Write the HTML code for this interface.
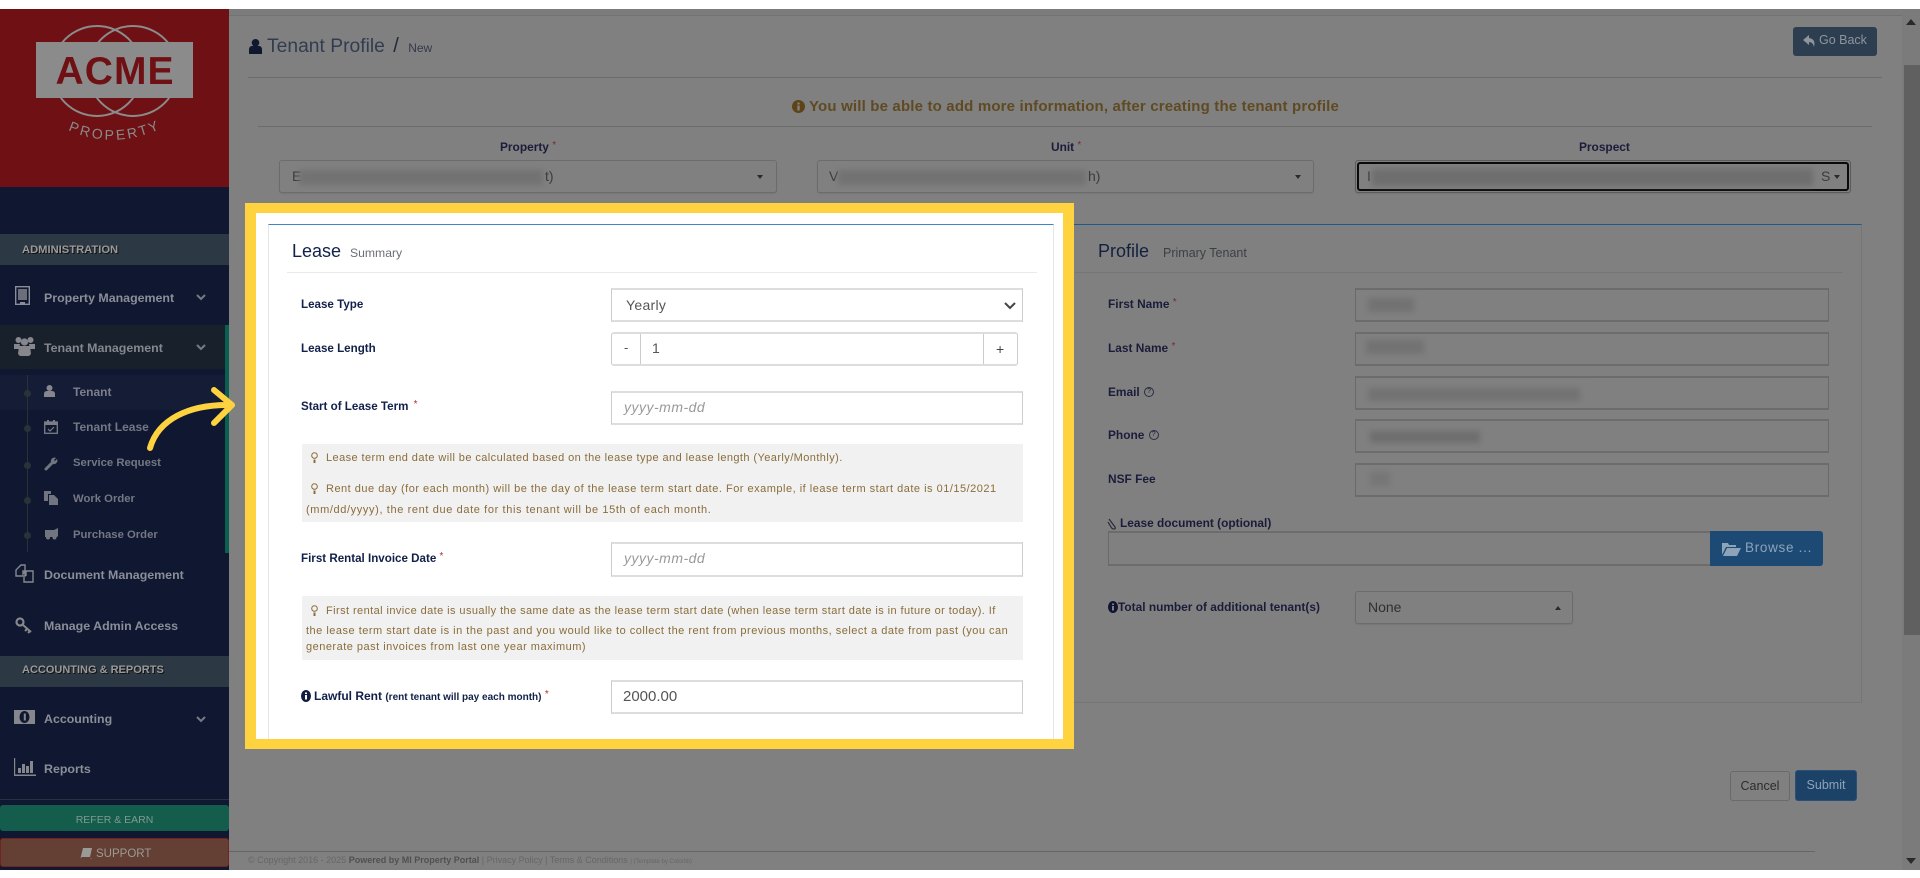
<!DOCTYPE html>
<html lang="en"><head><meta charset="utf-8"><title>Tenant Profile</title>
<style>
html,body{margin:0;padding:0;width:1920px;height:878px;overflow:hidden;background:#fff;font-family:"Liberation Sans",sans-serif}
#p{position:relative;width:1920px;height:878px;overflow:hidden;background:#fff}
.a{position:absolute;box-sizing:border-box}
.t{position:absolute;white-space:nowrap;height:20px;line-height:20px}
.side{font-size:12.4px;font-weight:bold;color:#8b8e98}
.sub{font-size:11.3px;font-weight:bold;color:#747784}
.band{font-size:11px;font-weight:bold;color:#9a9a9a;text-shadow:1px 1px 0 #111}
.lb{font-size:11.6px;font-weight:bold;color:#12204a}
.dl{font-size:11.9px;font-weight:bold;color:#1a1d3a}
.br{font-size:11px;color:#8a6d3b;letter-spacing:.42px}
.inp{position:absolute;box-sizing:border-box;background:#fff;border:1px solid #ccc;border-top:2px solid #ddd;border-bottom:2px solid #ddd}
.dk{position:absolute;box-sizing:border-box;border:1px solid #6a6a6a;border-top:2px solid #6c6c6c;border-bottom:2px solid #6c6c6c;background:#808080}
.sel{position:absolute;box-sizing:border-box;border:1px solid #6c6c6c;border-radius:3px;background:#808080;box-shadow:0 1px 1px #777}
.b{position:absolute;background:#727272;filter:blur(3px)}
.ph{font-size:14px;font-style:italic;color:#999;letter-spacing:.5px}
.req{color:#b03030;font-size:10px;font-weight:normal;position:relative;top:-3px}
.reqd{color:#7a2a2a;font-size:10px;font-weight:normal;position:relative;top:-3px}
.q{display:inline-block;box-sizing:border-box;width:10px;height:10px;border:1px solid #2a2d44;border-radius:50%;font-size:7px;line-height:8px;text-align:center;font-weight:normal;margin-left:1px;position:relative;top:-1px;vertical-align:middle}
svg{position:absolute;overflow:visible}
</style></head><body><div id="p">

<!-- page background -->
<div class="a" style="left:0;top:9px;width:1920px;height:861px;background:#808080"></div>
<div class="a" style="left:229px;top:9px;width:1673px;height:7px;background:#7c7c7c;border-bottom:1px solid #727272"></div>

<!-- scrollbar -->
<div class="a" style="left:1902px;top:9px;width:18px;height:861px;background:#7b7b7b"></div>
<div class="a" style="left:1904px;top:65px;width:16px;height:570px;background:#606060"></div>
<svg style="left:1906px;top:18px" width="12" height="8"><path d="M5 1L10 7H0z" fill="#2a2a2a"/></svg>
<svg style="left:1906px;top:857px" width="12" height="8"><path d="M0 1H10L5 7z" fill="#2a2a2a"/></svg>

<!-- sidebar -->
<div class="a" style="left:0;top:9px;width:229px;height:861px;background:#0f1830"></div>
<div class="a" style="left:0;top:9px;width:229px;height:178px;background:#6e1014"></div>
<svg style="left:0;top:9px" width="229" height="178" viewBox="0 9 229 178">
<circle cx="97" cy="71" r="45" fill="none" stroke="#8b8b8b" stroke-width="2"/>
<circle cx="133" cy="71" r="45" fill="none" stroke="#8b8b8b" stroke-width="2"/>
<rect x="36" y="42" width="157" height="56" fill="#8b8b8b"/>
<text x="114.500" y="84" font-family="Liberation Sans" font-weight="bold" font-size="39" text-anchor="middle" fill="#6e1014" textLength="118">ACME</text>
<path id="arc" d="M68 130 Q113 150 160 129" fill="none"/>
<text font-family="Liberation Sans" font-size="14" fill="#8b8b8b" letter-spacing="2.500"><textPath href="#arc">PROPERTY</textPath></text>
</svg>

<div class="a" style="left:0;top:234px;width:229px;height:31px;background:#2c3844"></div>
<div class="t band" style="left:22px;top:240px;font-size:11.2px">ADMINISTRATION</div>

<!-- Property Management -->
<svg style="left:15px;top:286px" width="15" height="19" viewBox="0 0 15 19"><rect x=".7" y=".7" width="13.600" height="17.600" fill="none" stroke="#8b8e98" stroke-width="1.400"/><path d="M3 3h9v11H3z" fill="#6c6f7a"/><path d="M5 16h5v2H5z" fill="#8b8e98"/></svg>
<div class="t side" style="left:44px;top:288px">Property Management</div>
<svg style="left:196px;top:294px" width="10" height="7"><path d="M1 1L5 5L9 1" fill="none" stroke="#777a85" stroke-width="2"/></svg>

<!-- Tenant Management -->
<div class="a" style="left:0;top:325px;width:225px;height:44px;background:#18212b"></div>
<div class="a" style="left:225px;top:325px;width:4px;height:228px;background:#0a6050"></div>
<svg style="left:14px;top:336px" width="21" height="20" viewBox="0 0 21 20" fill="#85878c"><circle cx="4.500" cy="4" r="3"/><circle cx="16.500" cy="4" r="3"/><circle cx="10.500" cy="6" r="3.600"/><path d="M0 8h6l-1 5H0zM15 8h6v5h-5zM5 10h11l1 8-2 2H6l-2-2z"/></svg>
<div class="t side" style="left:44px;top:338px;color:#84878c">Tenant Management</div>
<svg style="left:196px;top:344px" width="10" height="7"><path d="M1 1L5 5L9 1" fill="none" stroke="#777a85" stroke-width="2"/></svg>

<!-- submenu -->
<div class="a" style="left:0;top:375px;width:225px;height:35px;background:#141c36"></div>
<div class="a" style="left:27px;top:375px;width:1px;height:177px;background:#2a3238"></div>
<div class="a" style="left:24px;top:390px;width:7px;height:7px;border-radius:50%;background:#2a3238"></div>
<div class="a" style="left:24px;top:425px;width:7px;height:7px;border-radius:50%;background:#2a3238"></div>
<div class="a" style="left:24px;top:462px;width:7px;height:7px;border-radius:50%;background:#2a3238"></div>
<div class="a" style="left:24px;top:497px;width:7px;height:7px;border-radius:50%;background:#2a3238"></div>
<div class="a" style="left:24px;top:532px;width:7px;height:7px;border-radius:50%;background:#2a3238"></div>

<svg style="left:44px;top:385px" width="11" height="12" viewBox="0 0 11 12" fill="#85878c"><circle cx="5.500" cy="3" r="3"/><path d="M0 12V9q0-3 3-3h5q3 0 3 3v3z"/></svg>
<div class="t sub" style="left:73px;top:382px;color:#7c7f8c;font-size:12px">Tenant</div>
<svg style="left:44px;top:420px" width="14" height="14" viewBox="0 0 14 14"><rect x=".7" y="2" width="12.600" height="11.300" fill="none" stroke="#7a7d88" stroke-width="1.300"/><path d="M1 2h12v3H1zM3 0h2v3H3zM9 0h2v3H9z" fill="#7a7d88"/><path d="M4 9l2 2 4-4" fill="none" stroke="#7a7d88" stroke-width="1.200"/></svg>
<div class="t sub" style="left:73px;top:417px;font-size:12px">Tenant Lease</div>
<svg style="left:45px;top:457px" width="13" height="13" viewBox="0 0 13 13"><path d="M1 12L7 6" stroke="#727580" stroke-width="3" stroke-linecap="round"/><path d="M6 5a3.500 3.500 0 0 1 5-4L9 3l1 1 2-2a3.500 3.500 0 0 1-4 5z" fill="#727580"/></svg>
<div class="t sub" style="left:73px;top:453px">Service Request</div>
<svg style="left:44px;top:491px" width="14" height="14" viewBox="0 0 14 14" fill="#727580"><path d="M0 0h7v3H4v7H0z"/><path d="M5 4h5l4 4v6H5z"/></svg>
<div class="t sub" style="left:73px;top:489px">Work Order</div>
<svg style="left:45px;top:528px" width="13" height="12" viewBox="0 0 13 12" fill="#727580"><path d="M0 2h9l4-2v8l-1 1H0z"/><circle cx="3" cy="9.500" r="2"/><circle cx="9.500" cy="9.500" r="2"/></svg>
<div class="t sub" style="left:73px;top:525px">Purchase Order</div>

<!-- Document Management -->
<svg style="left:15px;top:564px" width="19" height="19" viewBox="0 0 19 19" fill="none" stroke="#85878c" stroke-width="1.400"><path d="M1 12V6l5-5h4v11z"/><path d="M8 7h3l-3 3zM9 7h4l5 0v11H9v-5"/><path d="M11 7v5"/></svg>
<div class="t side" style="left:44px;top:565px">Document Management</div>

<!-- Manage Admin -->
<svg style="left:15px;top:617px" width="18" height="17" viewBox="0 0 18 17" fill="none" stroke="#85878c"><circle cx="5" cy="5" r="3.500" stroke-width="2.200"/><path d="M8 8l8 7M12 12l-2 2M15 14l-2 2" stroke-width="2"/></svg>
<div class="t side" style="left:44px;top:616px">Manage Admin Access</div>

<div class="a" style="left:0;top:656px;width:229px;height:31px;background:#2c3844"></div>
<div class="t band" style="left:22px;top:660px">ACCOUNTING &amp; REPORTS</div>

<!-- Accounting -->
<svg style="left:14px;top:710px" width="21" height="14" viewBox="0 0 21 14"><rect width="21" height="14" fill="#85878c"/><ellipse cx="10.500" cy="7" rx="5" ry="6" fill="#0f1830"/><rect x="9.800" y="3.500" width="2" height="7" fill="#85878c"/></svg>
<div class="t side" style="left:44px;top:709px">Accounting</div>
<svg style="left:196px;top:716px" width="10" height="7"><path d="M1 1L5 5L9 1" fill="none" stroke="#777a85" stroke-width="2"/></svg>

<!-- Reports -->
<svg style="left:14px;top:758px" width="22" height="18" viewBox="0 0 22 18" fill="#85878c"><path d="M0 0h1.200v16.500H22V18H0z"/><rect x="4" y="10" width="3" height="5"/><rect x="8" y="6" width="3" height="9"/><rect x="12" y="8" width="3" height="7"/><rect x="16" y="3" width="3" height="12"/></svg>
<div class="t side" style="left:44px;top:759px">Reports</div>

<div class="a" style="left:0;top:799px;width:229px;height:1px;background:#2a3042"></div>
<div class="a" style="left:0;top:805px;width:229px;height:26px;background:#145c4c;border-radius:3px;text-align:center;line-height:30px;font-size:10.500px;color:#7e9a90">REFER &amp; EARN</div>
<div class="a" style="left:0;top:838px;width:229px;height:29px;background:#644034;border:1px solid #772222;border-radius:3px"></div>
<svg style="left:81px;top:848px" width="11" height="11" viewBox="0 0 11 11" fill="#9a9a96"><path d="M2 0h9L9 9H1a1 1 0 0 0 0 2h8l2-1-1 1H1Q-1 10 0 8z"/></svg>
<div class="t" style="left:96px;top:844px;font-size:11.500px;color:#9a9a96">SUPPORT</div>

<!-- header -->
<svg style="left:249px;top:39px" width="13" height="15" viewBox="0 0 13 15" fill="#101830"><circle cx="6.500" cy="3.800" r="3.800"/><path d="M0 15v-4q0-4 3-4h7q3 0 3 4v4z"/></svg>
<div class="t" style="left:267px;top:36px;font-size:19.300px;color:#323c50">Tenant Profile <span style="color:#20283c;font-size:20px;margin-left:3px">/</span> <span style="font-size:12px;color:#333a48;margin-left:4px">New</span></div>
<div class="a" style="left:1793px;top:27px;width:84px;height:29px;background:#2c3e50;border-radius:3px"></div>
<svg style="left:1803px;top:35px" width="13" height="13" viewBox="0 0 13 13" fill="#8e959e"><path d="M6 0L0 5l6 5V7q4 0 5 5 2-8-5-9z"/></svg>
<div class="t" style="left:1819px;top:30px;font-size:12.500px;color:#8e959e">Go Back</div>
<div class="a" style="left:248px;top:77px;width:1634px;height:1px;background:#6c6c6c"></div>

<svg style="left:792px;top:100px" width="13" height="13" viewBox="0 0 13 13"><circle cx="6.500" cy="6.500" r="6.500" fill="#5e4318"/><rect x="5.300" y="2.500" width="2.400" height="2" fill="#808080"/><rect x="5.300" y="5.500" width="2.400" height="5" fill="#808080"/></svg>
<div class="t" style="left:809px;top:97px;font-size:15px;font-weight:bold;color:#5f4a22;letter-spacing:.17px">You will be able to add more information, after creating the tenant profile</div>
<div class="a" style="left:258px;top:126px;width:1614px;height:1px;background:#6c6c6c"></div>

<div class="t dl" style="left:500px;top:137px">Property <span class="reqd">*</span></div>
<div class="t dl" style="left:1051px;top:137px">Unit <span class="reqd">*</span></div>
<div class="t dl" style="left:1579px;top:137px">Prospect</div>

<div class="sel" style="left:279px;top:160px;width:498px;height:33px"></div>
<div class="t" style="left:292px;top:166px;font-size:14px;color:#3c3c3c">E</div>
<div class="b" style="left:299px;top:170px;width:244px;height:15px"></div>
<div class="t" style="left:545px;top:166px;font-size:14px;color:#3c3c3c">t)</div>
<svg style="left:757px;top:175px" width="6" height="4"><path d="M0 0H6L3 4z" fill="#2a2a2a"/></svg>

<div class="sel" style="left:817px;top:160px;width:497px;height:33px"></div>
<div class="t" style="left:829px;top:166px;font-size:14px;color:#3c3c3c">V</div>
<div class="b" style="left:838px;top:170px;width:248px;height:15px"></div>
<div class="t" style="left:1088px;top:166px;font-size:14px;color:#3c3c3c">h)</div>
<svg style="left:1295px;top:175px" width="6" height="4"><path d="M0 0H6L3 4z" fill="#2a2a2a"/></svg>

<div class="sel" style="left:1355px;top:160px;width:496px;height:33px;border:1px solid #5c5c5c"></div>
<div class="a" style="left:1357px;top:162px;width:492px;height:29px;border:2px solid #0a0a0a;border-radius:3px"></div>
<div class="t" style="left:1367px;top:166px;font-size:14px;color:#3c3c3c">I</div>
<div class="b" style="left:1372px;top:169px;width:441px;height:17px;background:#6e6e6e"></div>
<div class="t" style="left:1821px;top:166px;font-size:14px;color:#3c3c3c">S</div>
<svg style="left:1834px;top:175px" width="6" height="4"><path d="M0 0H6L3 4z" fill="#2a2a2a"/></svg>

<!-- profile card -->
<div class="a" style="left:1000px;top:224px;width:862px;height:479px;border:1px solid #767676;border-top:1px solid #1f5a8c"></div>
<div class="t" style="left:1098px;top:241px;font-size:18px;color:#14203e">Profile</div>
<div class="t" style="left:1163px;top:243px;font-size:12.500px;color:#3c4044">Primary Tenant</div>
<div class="a" style="left:1075px;top:272px;width:768px;height:1px;background:#767676"></div>

<div class="t dl" style="left:1108px;top:294px">First Name <span class="reqd">*</span></div>
<div class="dk" style="left:1355px;top:288px;width:474px;height:34px"></div>
<div class="b" style="left:1368px;top:298px;width:46px;height:14px"></div>
<div class="t dl" style="left:1108px;top:338px">Last Name <span class="reqd">*</span></div>
<div class="dk" style="left:1355px;top:332px;width:474px;height:34px"></div>
<div class="b" style="left:1366px;top:340px;width:58px;height:14px"></div>
<div class="t dl" style="left:1108px;top:382px">Email <span class="q">?</span></div>
<div class="dk" style="left:1355px;top:376px;width:474px;height:34px"></div>
<div class="b" style="left:1368px;top:388px;width:212px;height:13px"></div>
<div class="t dl" style="left:1108px;top:425px">Phone <span class="q">?</span></div>
<div class="dk" style="left:1355px;top:419px;width:474px;height:34px"></div>
<div class="b" style="left:1370px;top:431px;width:110px;height:12px;background:#6e6e6e"></div>
<div class="t dl" style="left:1108px;top:469px">NSF Fee</div>
<div class="dk" style="left:1355px;top:463px;width:474px;height:34px"></div>
<div class="b" style="left:1370px;top:472px;width:20px;height:14px;background:#767676"></div>

<svg style="left:1108px;top:517px" width="9" height="12" viewBox="0 0 9 12"><path d="M1 2l6 8q1 2-1 2T3 10L0 5" fill="none" stroke="#2a2a3a" stroke-width="1.200"/></svg>
<div class="t dl" style="left:1120px;top:513px">Lease document (optional)</div>
<div class="dk" style="left:1108px;top:531px;width:603px;height:35px"></div>
<div class="a" style="left:1710px;top:531px;width:113px;height:35px;background:#1c4a75;border-radius:0 3px 3px 0"></div>
<svg style="left:1722px;top:541px" width="19" height="15" viewBox="0 0 19 15" fill="#8da3b8"><path d="M0 2h6l1 2h7v2H4L0 14zM5 7h14l-4 8H1z"/></svg>
<div class="t" style="left:1745px;top:538px;font-size:13.500px;color:#8da3b8;letter-spacing:.7px">Browse ...</div>

<svg style="left:1108px;top:601px" width="10" height="12" viewBox="0 0 10 12"><ellipse cx="5" cy="6" rx="5" ry="6" fill="#101430"/><rect x="4" y="2.500" width="2" height="1.500" fill="#808080"/><rect x="4" y="5" width="2" height="4.500" fill="#808080"/></svg>
<div class="t dl" style="left:1118px;top:597px">Total number of additional tenant(s)</div>
<div class="sel" style="left:1355px;top:591px;width:218px;height:33px"></div>
<div class="t" style="left:1368px;top:597px;font-size:14px;color:#303030">None</div>
<svg style="left:1555px;top:606px" width="6" height="4"><path d="M3 0L6 4H0z" fill="#2a2a2a"/></svg>

<div class="a" style="left:1730px;top:771px;width:60px;height:30px;border:1px solid #6a6a6a;border-radius:3px;text-align:center;line-height:28px;font-size:12.500px;color:#2c2c2c">Cancel</div>
<div class="a" style="left:1795px;top:770px;width:62px;height:31px;background:#1c4268;border:1px solid #2a5078;border-radius:3px;text-align:center;line-height:29px;font-size:12.500px;color:#8da3b8">Submit</div>

<!-- footer -->
<div class="a" style="left:229px;top:851px;width:1586px;height:1px;background:#666"></div>
<div class="t" style="left:248px;top:850px;font-size:9px;color:#666">&copy; Copyright 2016 - 2025 <b style="color:#505050">Powered by MI Property Portal</b> | Privacy Policy | Terms &amp; Conditions <span style="font-size:6px">| (Template by Colorlib)</span></div>

<!-- highlight -->
<div class="a" style="left:245px;top:203px;width:829px;height:546px;background:#ffd23f"></div>
<div class="a" style="left:256px;top:213px;width:807px;height:526px;background:#fff;overflow:hidden"></div>
<div class="a" style="left:268px;top:224px;width:786px;height:515px;border-left:1px solid #e6e6e6;border-right:1px solid #e6e6e6;border-top:1px solid #3a87c8"></div>
<div class="t" style="left:292px;top:241px;font-size:18px;color:#12204a">Lease</div>
<div class="t" style="left:350px;top:243px;font-size:12.200px;color:#6b6f73">Summary</div>
<div class="a" style="left:287px;top:272px;width:750px;height:1px;background:#eaeaea"></div>

<div class="t lb" style="left:301px;top:295px">Lease Type</div>
<div class="inp" style="left:611px;top:288px;width:412px;height:34px"></div>
<div class="t" style="left:626px;top:295px;font-size:14px;color:#555;letter-spacing:.3px">Yearly</div>
<svg style="left:1004px;top:302px" width="12" height="8"><path d="M1 1L6 6L11 1" fill="none" stroke="#444" stroke-width="2"/></svg>

<div class="t lb" style="left:301px;top:339px">Lease Length</div>
<div class="inp" style="left:611px;top:332px;width:407px;height:34px;border-radius:3px"></div>
<div class="a" style="left:640px;top:334px;width:1px;height:30px;background:#ccc"></div>
<div class="a" style="left:983px;top:334px;width:1px;height:30px;background:#ccc"></div>
<div class="t" style="left:624px;top:338px;font-size:13px;color:#555">-</div>
<div class="t" style="left:652px;top:338px;font-size:14px;color:#555">1</div>
<div class="t" style="left:996px;top:339px;font-size:14px;color:#444">+</div>

<div class="t lb" style="left:301px;top:397px">Start of Lease Term <span class="req" style="margin-left:2px">*</span></div>
<div class="inp" style="left:611px;top:391px;width:412px;height:34px"></div>
<div class="t ph" style="left:624px;top:397px">yyyy-mm-dd</div>

<div class="a" style="left:302px;top:444px;width:721px;height:78px;background:#f1f1f1"></div>
<svg style="left:311px;top:452px" width="7" height="12" viewBox="0 0 7 12"><circle cx="3.500" cy="3.500" r="2.800" fill="none" stroke="#8a6d3b" stroke-width="1"/><path d="M2.500 7.500h2V11h-2z" fill="#8a6d3b"/></svg>
<div class="t br" style="left:326px;top:448px">Lease term end date will be calculated based on the lease type and lease length (Yearly/Monthly).</div>
<svg style="left:311px;top:483px" width="7" height="12" viewBox="0 0 7 12"><circle cx="3.500" cy="3.500" r="2.800" fill="none" stroke="#8a6d3b" stroke-width="1"/><path d="M2.500 7.500h2V11h-2z" fill="#8a6d3b"/></svg>
<div class="t br" style="left:326px;top:479px;letter-spacing:.5px">Rent due day (for each month) will be the day of the lease term start date. For example, if lease term start date is 01/15/2021</div>
<div class="t br" style="left:306px;top:500px;letter-spacing:.62px">(mm/dd/yyyy), the rent due date for this tenant will be 15th of each month.</div>

<div class="t lb" style="left:301px;top:549px">First Rental Invoice Date <span class="req">*</span></div>
<div class="inp" style="left:611px;top:542px;width:412px;height:35px"></div>
<div class="t ph" style="left:624px;top:548px">yyyy-mm-dd</div>

<div class="a" style="left:302px;top:596px;width:721px;height:64px;background:#f1f1f1"></div>
<svg style="left:311px;top:605px" width="7" height="12" viewBox="0 0 7 12"><circle cx="3.500" cy="3.500" r="2.800" fill="none" stroke="#8a6d3b" stroke-width="1"/><path d="M2.500 7.500h2V11h-2z" fill="#8a6d3b"/></svg>
<div class="t br" style="left:326px;top:601px">First rental invice date is usually the same date as the lease term start date (when lease term start date is in future or today). If</div>
<div class="t br" style="left:306px;top:621px;letter-spacing:.5px">the lease term start date is in the past and you would like to collect the rent from previous months, select a date from past (you can</div>
<div class="t br" style="left:306px;top:637px;letter-spacing:.49px">generate past invoices from last one year maximum)</div>

<svg style="left:301px;top:690px" width="10" height="12" viewBox="0 0 10 12"><ellipse cx="5" cy="6" rx="5" ry="6" fill="#101c40"/><rect x="4" y="2.500" width="2" height="1.500" fill="#fff"/><rect x="4" y="5" width="2" height="4.500" fill="#fff"/></svg>
<div class="t lb" style="left:314px;top:686px;font-size:12px">Lawful Rent <span style="font-size:10px">(rent tenant will pay each month)</span> <span class="req">*</span></div>
<div class="inp" style="left:611px;top:680px;width:412px;height:34px"></div>
<div class="t" style="left:623px;top:687px;font-size:15px;color:#555">2000.00</div>

<!-- arrow -->
<svg style="left:0;top:0" width="300" height="500"><path d="M150 448C158 420 188 404 231 405" fill="none" stroke="#ffd23f" stroke-width="6" stroke-linecap="round"/><path d="M214 390L232 405L214 423" fill="none" stroke="#ffd23f" stroke-width="6" stroke-linecap="round" stroke-linejoin="round"/></svg>

</div></body></html>
